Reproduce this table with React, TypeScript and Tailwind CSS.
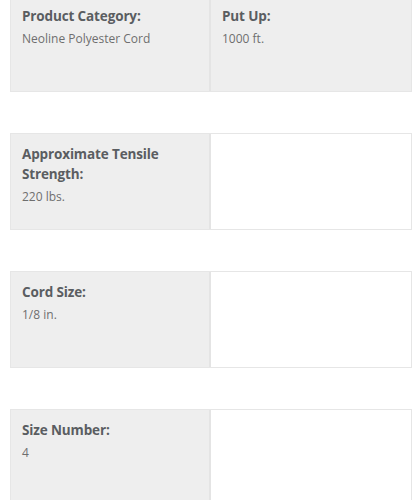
const specs = [
  { label: "Product Category:", value: "Neoline Polyester Cord", right: { label: "Put Up:", value: "1000 ft." } },
  { label: "Approximate Tensile Strength:", value: "220 lbs." },
  { label: "Cord Size:", value: "1/8 in." },
  { label: "Size Number:", value: "4" },
]

const Cell = ({ label, value }: { label: string; value: string }) => (
  <div className="h-full bg-[#eeeeee] pl-[11px] pr-[12px] pt-[10px]">
    <h4 className="text-[13.5px] leading-[20px] font-bold tracking-[-0.01em] text-[#5a5d61]">{label}</h4>
    <p className="mt-[3px] text-[12px] leading-[20px] text-[#6e6e6e]">{value}</p>
  </div>
)

export default function App() {
  return (
    <div
      className="bg-white pl-[10px] pr-[5px] h-[500px] overflow-hidden"
      style={{ fontFamily: '"Open Sans", "Noto Sans", sans-serif' }}
    >
      <div className="flex flex-col gap-[41px] -mt-[5px]">
        {specs.map((s, i) => (
          <div key={i} className="grid grid-cols-2 h-[97px] border border-[#e6e6e6]">
            <div className="border-r-2 border-[#e4e4e4]">
              <Cell label={s.label} value={s.value} />
            </div>
            {s.right ? <Cell label={s.right.label} value={s.right.value} /> : <div className="bg-white" />}
          </div>
        ))}
      </div>
    </div>
  )
}
